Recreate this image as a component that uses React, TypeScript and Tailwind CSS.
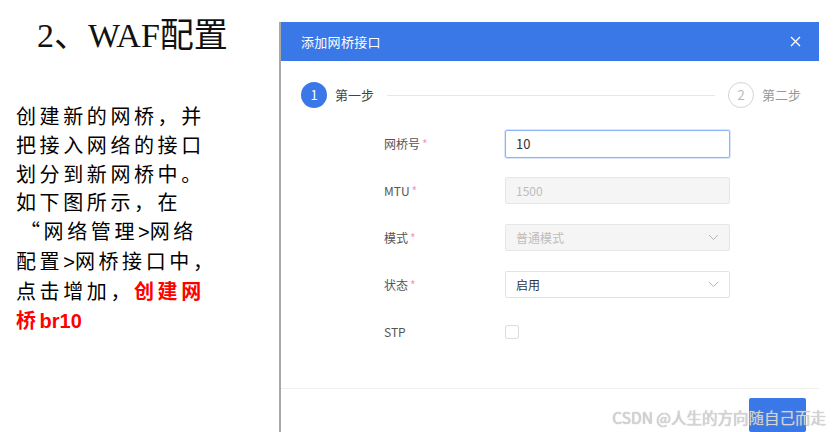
const cjk = { fontFamily: '"Noto Sans CJK SC", "Noto Sans", sans-serif' };

const Star = () => <span className="ml-[2px] text-[#f59ab0]">*</span>;

const Chevron = () => (
  <svg width="11" height="7" viewBox="0 0 11 7" fill="none" className="stroke-[#b4b4b4]">
    <path d="M1 1 L5.5 5.5 L10 1" strokeWidth="1" />
  </svg>
);

// latin bits inside the slide text get no extra tracking
const L = ({ children }: { children: string }) => (
  <span className="tracking-normal" style={{ fontFamily: '"Liberation Sans", Arial, sans-serif' }}>
    {children}
  </span>
);

const App = () => {
  return (
    <div className="relative flex h-[432px] w-[837px] overflow-hidden bg-white" style={cjk}>
      {/* left slide text */}
      <div className="w-[279px] shrink-0">
        <h1
          className="mt-[13px] pl-[37px] text-[34px] leading-[46px] text-[#111]"
          style={{ fontFamily: '"Liberation Serif", "Noto Sans CJK SC", serif' }}
        >
          2、WAF配置
        </h1>
        <div className="mt-[43px] pl-[16px] text-[20px] leading-[28.8px] tracking-[3.6px] text-black">
          <div className="whitespace-nowrap">创建新的网桥，并</div>
          <div className="whitespace-nowrap">把接入网络的接口</div>
          <div className="whitespace-nowrap">划分到新网桥中。</div>
          <div className="whitespace-nowrap">如下图所示，在</div>
          <div className="whitespace-nowrap">
            <span className="pl-[4px]">“</span>网络管理<L>&gt;</L>网络
          </div>
          <div className="whitespace-nowrap">
            配置<L>&gt;</L>网桥接口中，
          </div>
          <div className="whitespace-nowrap">
            点击增加，<span className="font-bold text-[#ff0000]">创建网</span>
          </div>
          <div className="whitespace-nowrap font-bold text-[#ff0000]">
            桥<L>br10</L>
          </div>
        </div>
      </div>

      {/* dialog */}
      <div className="mt-[22px] flex w-[540px] shrink-0 flex-col border-l-2 border-[#a8a8a8]">
        <div className="flex h-[43px] items-center justify-between bg-[#3b78e7] pl-[20px] pr-[18px] text-white">
          <span className="text-[13px] tracking-[0.3px]">添加网桥接口</span>
          <svg width="11" height="11" viewBox="0 0 11 11" className="stroke-white">
            <path d="M1 1 L10 10 M10 1 L1 10" strokeWidth="1.3" />
          </svg>
        </div>

        <div className="flex flex-1 flex-col bg-white">
          {/* steps */}
          <div className="mt-[21px] flex items-center pl-[20px] pr-[18px]">
            <div className="flex h-[26px] w-[26px] items-center justify-center rounded-full bg-[#3b78e7] text-[13px] text-white">
              1
            </div>
            <span className="ml-[8px] text-[13px] text-[#444]">第一步</span>
            <div className="mx-[13px] h-px flex-1 bg-[#e8e8e8]" />
            <div className="flex h-[26px] w-[26px] items-center justify-center rounded-full border border-[#d4d4d4] text-[13px] text-[#b8b8b8]">
              2
            </div>
            <span className="ml-[8px] text-[13px] text-[#999]">第二步</span>
          </div>

          {/* form */}
          <div className="mt-[22px] grid grid-cols-[121px_225px] gap-y-[19px] pl-[103px] text-[12px] text-[#555]">
            <div className="flex h-[28px] items-center">
              网桥号
              <Star />
            </div>
            <div className="flex h-[28px] items-center rounded-[2px] border border-[#8cb3f5] px-[10px] text-[13px] text-[#333] shadow-[0_0_0_1px_#dbe7fc]">
              10
            </div>

            <div className="flex h-[28px] items-center">
              MTU
              <Star />
            </div>
            <div className="flex h-[27px] items-center rounded-[2px] border border-[#e6e6e6] bg-[#f5f5f5] px-[10px] text-[12px] text-[#bdbdbd]">
              1500
            </div>

            <div className="flex h-[28px] items-center">
              模式
              <Star />
            </div>
            <div className="flex h-[27px] items-center justify-between rounded-[2px] border border-[#e6e6e6] bg-[#f5f5f5] pl-[10px] pr-[10px] text-[12px] text-[#bdbdbd]">
              普通模式
              <Chevron />
            </div>

            <div className="flex h-[28px] items-center">
              状态
              <Star />
            </div>
            <div className="flex h-[27px] items-center justify-between rounded-[2px] border border-[#e3e3e3] bg-white pl-[10px] pr-[10px] text-[12px] text-[#333]">
              启用
              <Chevron />
            </div>

            <div className="flex h-[28px] items-center">STP</div>
            <div className="flex h-[28px] items-center">
              <div className="h-[14px] w-[14px] rounded-[2px] border border-[#dcdcdc] bg-white" />
            </div>
          </div>

          {/* footer */}
          <div className="mt-[42px] h-px bg-[#f0f0f0]" />
          <div className="flex justify-end pr-[13px] pt-[9px]">
            <div className="h-[34px] w-[57px] rounded-[2px] bg-[#3b78e7]" />
          </div>
        </div>
      </div>

      {/* watermark */}
      <div className="absolute right-[11px] top-[406px] whitespace-nowrap text-[15.5px] text-[#d4d4d4] [text-shadow:0_0_1px_#a8a8a8]">
        CSDN @人生的方向随自己而走
      </div>
    </div>
  );
};

export default App;
